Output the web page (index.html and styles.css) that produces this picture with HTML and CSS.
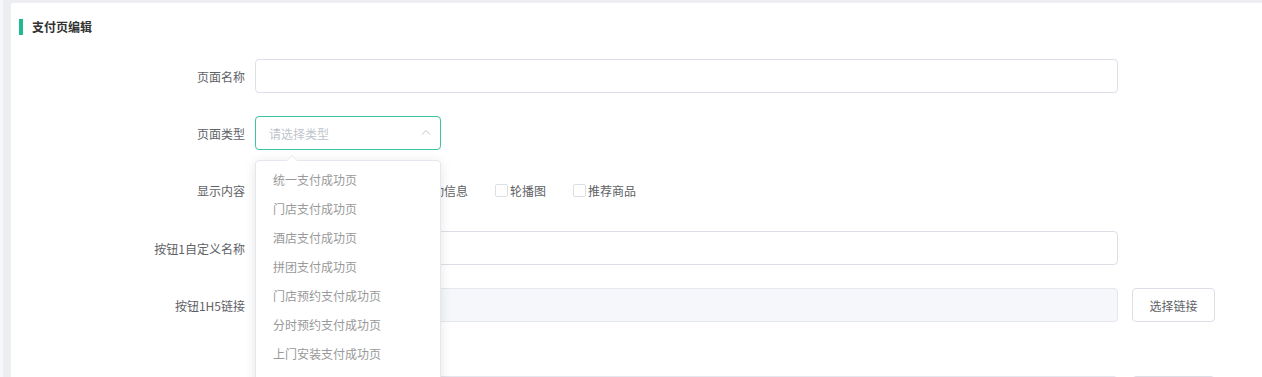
FILE: index.html
```html
<!DOCTYPE html>
<html lang="zh-CN">
<head>
<meta charset="UTF-8">
<meta name="viewport" content="width=device-width, initial-scale=1.0">
<title>支付页编辑</title>
<link rel="stylesheet" href="styles.css">
</head>
<body>

<div class="layout">
    <div class="side-edge"></div>
    <div class="main">
        <div class="card">
            <h2 class="card-title">支付页编辑</h2>
            <form class="edit-form">
                <div class="form-item">
                    <label class="form-label">页面名称</label>
                    <input type="text" class="form-input wide">
                </div>
                <div class="form-item">
                    <label class="form-label">页面类型</label>
                    <div class="select">
                        <input type="text" class="form-input select-input" placeholder="请选择类型" readonly>
                        <span class="select-arrow">
                            <svg width="12" height="12" viewBox="0 0 12 12"><path d="M2 7.5 L6 3.5 L10 7.5" fill="none" stroke="#c0c4cc" stroke-width="1"/></svg>
                        </span>
                        <div class="dropdown">
                            <div class="dropdown-arrow"></div>
                            <ul class="dropdown-list">
                                <li>统一支付成功页</li>
                                <li>门店支付成功页</li>
                                <li>酒店支付成功页</li>
                                <li>拼团支付成功页</li>
                                <li>门店预约支付成功页</li>
                                <li>分时预约支付成功页</li>
                                <li>上门安装支付成功页</li>
                                <li>积分兑换支付成功页</li>
                            </ul>
                        </div>
                    </div>
                </div>
                <div class="form-item tall">
                    <label class="form-label">显示内容</label>
                    <div class="checks">
                        <label class="check"><span class="check-box"></span>订单及支付结果信息</label>
                        <label class="check"><span class="check-box"></span>活动信息</label>
                        <label class="check"><span class="check-box"></span>轮播图</label>
                        <label class="check"><span class="check-box"></span>推荐商品</label>
                    </div>
                </div>
                <div class="form-item">
                    <label class="form-label">按钮1自定义名称</label>
                    <input type="text" class="form-input wide">
                </div>
                <div class="form-item">
                    <label class="form-label">按钮1H5链接</label>
                    <input type="text" class="form-input wide" disabled>
                    <button type="button" class="link-btn">选择链接</button>
                </div>
                <div class="form-item spaced">
                    <label class="form-label">按钮2H5链接</label>
                    <input type="text" class="form-input wide" disabled>
                    <button type="button" class="link-btn">选择链接</button>
                </div>
            </form>
        </div>
    </div>
</div>

</body>
</html>
```

FILE: styles.css
```css
body {
    font-family: "Noto Sans CJK SC", "Liberation Sans", sans-serif;
    font-size: 12px;
    background-color: #eceef1;
    margin: 0;
    padding: 0;
    height: 377px;
    overflow: hidden;
}
.layout {
    display: flex;
    height: 100%;
}
.side-edge {
    width: 3px;
    background-color: #f6f7f9;
    flex-shrink: 0;
}
.main {
    flex: 1;
    padding: 3px 0 0 8px;
    min-width: 0;
}
.card {
    background-color: #fff;
    height: 100%;
    padding: 16px 0 0 8px;
    border-top-left-radius: 2px;
}
.card-title {
    margin: 0;
    font-size: 12px;
    font-weight: bold;
    color: #333;
    line-height: 16px;
    border-left: 4px solid #1fba90;
    padding-left: 9px;
}
.edit-form {
    margin-top: 24px;
}
.form-item {
    display: flex;
    align-items: center;
    height: 34px;
    margin-bottom: 23px;
}
.form-item.tall {
    height: 35px;
}
.form-item.spaced {
    margin-top: 54px;
}
.form-label {
    width: 226px;
    padding-right: 10px;
    text-align: right;
    color: #606266;
    flex-shrink: 0;
}
.form-input {
    height: 34px;
    box-sizing: border-box;
    border: 1px solid #dcdfe6;
    border-radius: 4px;
    padding: 0 13px;
    font-family: inherit;
    font-size: 12px;
    color: #606266;
    background-color: #fff;
    outline: none;
}
.form-input.wide {
    width: 863px;
}
.form-input:disabled {
    background-color: #f5f7fa;
    border-color: #e4e7ed;
}
.form-input::placeholder {
    color: #c0c4cc;
}
.select {
    position: relative;
    width: 186px;
    height: 34px;
}
.select-input {
    width: 100%;
    border-color: #3cc3a0;
}
.select-arrow {
    position: absolute;
    right: 9px;
    top: 11px;
    line-height: 0;
}
.dropdown {
    position: absolute;
    top: 44px;
    left: 0;
    width: 186px;
    background-color: #fff;
    border: 1px solid #e4e7ed;
    border-radius: 4px;
    box-shadow: 0 2px 12px rgba(0, 0, 0, 0.1);
    box-sizing: border-box;
    z-index: 10;
}
.dropdown-arrow {
    position: absolute;
    top: -6px;
    left: 30px;
    width: 0;
    height: 0;
    border-left: 6px solid transparent;
    border-right: 6px solid transparent;
    border-bottom: 6px solid #e4e7ed;
}
.dropdown-arrow::after {
    content: "";
    position: absolute;
    top: 1px;
    left: -6px;
    border-left: 6px solid transparent;
    border-right: 6px solid transparent;
    border-bottom: 6px solid #fff;
}
.dropdown-list {
    list-style: none;
    margin: 0;
    padding: 4px 0;
}
.dropdown-list li {
    height: 29px;
    line-height: 29px;
    padding-left: 17px;
    color: #999;
}
.checks {
    display: flex;
    align-items: center;
}
.check {
    display: flex;
    align-items: center;
    color: #606266;
    margin-right: 27px;
}
.check-box {
    width: 11px;
    height: 11px;
    border: 1px solid #dcdfe6;
    border-radius: 2px;
    margin-right: 2px;
    background-color: #fff;
}
.link-btn {
    margin-left: 14px;
    width: 83px;
    height: 34px;
    border: 1px solid #dcdfe6;
    border-radius: 4px;
    background-color: #fff;
    color: #606266;
    font-family: inherit;
    font-size: 12px;
    cursor: pointer;
}
```
